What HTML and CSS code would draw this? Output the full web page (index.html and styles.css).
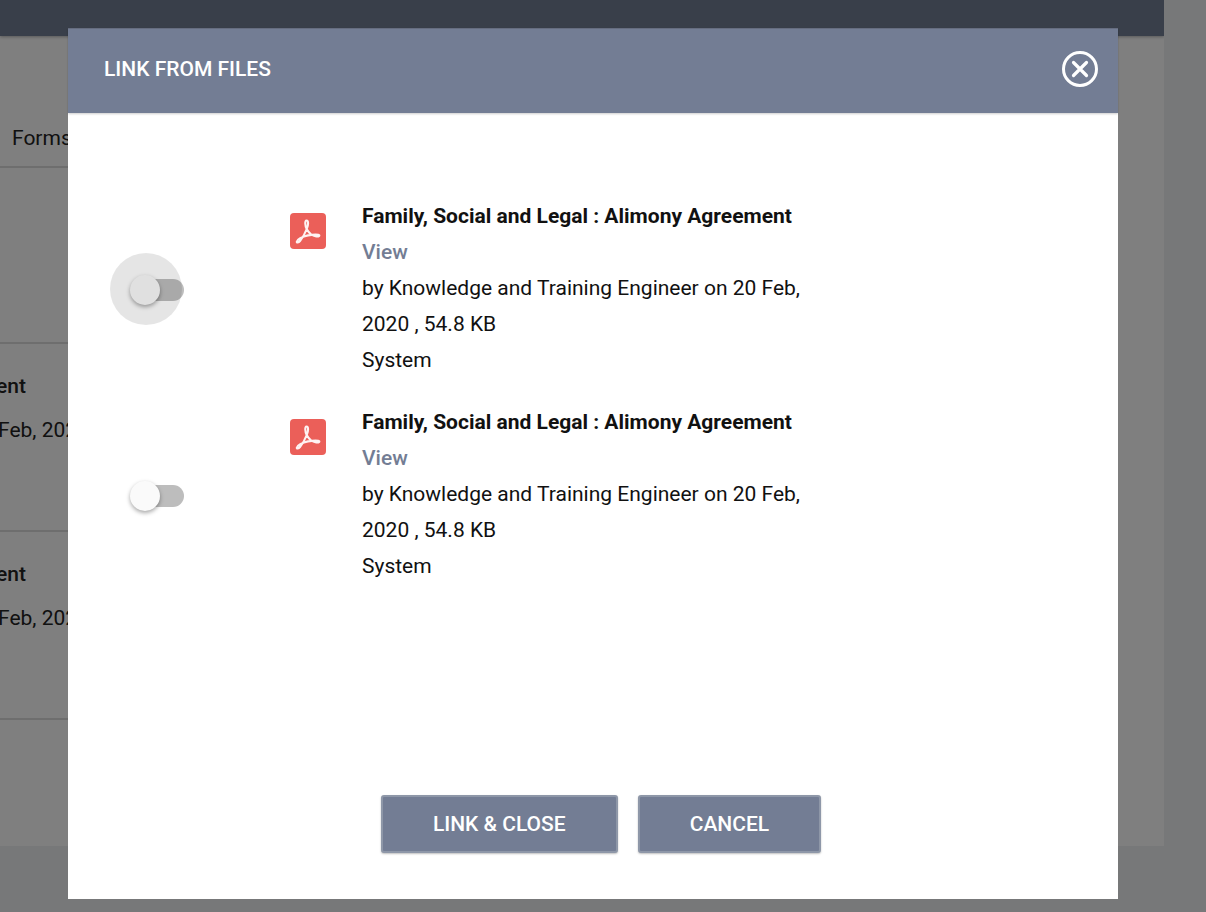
FILE: index.html
```html
<!DOCTYPE html>
<html lang="en">
<head>
  <meta charset="UTF-8">
  <meta name="viewport" content="width=device-width, initial-scale=1.0">
  <title>Link From Files</title>
  <link rel="stylesheet" href="styles.css">
</head>
<body>
  <main class="page">
    <div class="topbar"></div>
    <div class="list">
      <nav class="tabs"><a class="tab" href="#forms">Forms</a></nav>
      <div class="entry entry-first"></div>
      <div class="entry">
        <div class="entry-title">ent</div>
        <div>Feb, 2020</div>
      </div>
      <div class="entry">
        <div class="entry-title">ent</div>
        <div>Feb, 2020</div>
      </div>
    </div>
  </main>

  <svg class="sprite" aria-hidden="true">
    <symbol id="pdf" viewBox="0 0 36 36">
      <rect width="36" height="36" rx="4" fill="#eb5f59"/>
      <g fill="none" stroke="#fff" stroke-opacity="0.92" stroke-width="2.100" stroke-linecap="round" stroke-linejoin="round">
        <path d="M16.700 16C15 12.500 14.600 7.500 16.600 7.500s1.900 4.500.1 8.500C15.200 20 12.800 24.500 10 28c-1.500 1.900-3.400 2-3.200.6.300-2 5.200-5 11.200-6.200 4.500-.9 11.600-1.300 11.400.3-.2 1.600-5.600.8-8.200-1.200-1.700-1.400-3.200-3-4.500-5.500z"/>
      </g>
    </symbol>
  </svg>

  <div class="overlay">
    <section class="dialog" role="dialog" aria-modal="true" aria-labelledby="dialog-title">
      <header class="dialog-header">
        <h1 class="dialog-title" id="dialog-title">LINK FROM FILES</h1>
        <button class="close" type="button" aria-label="Close">
          <svg width="36" height="36" viewBox="0 0 36 36" fill="none" stroke="#fff">
            <circle cx="18" cy="18" r="16.500" stroke-width="3"/>
            <path d="M11.500 11.500l13 13M24.500 11.500l-13 13" stroke-width="3.200" stroke-linecap="round"/>
          </svg>
        </button>
      </header>

      <div class="files">
        <div class="file">
          <div class="toggle focused">
            <input type="checkbox" class="switch" id="file1">
          </div>
          <svg class="file-icon"><use href="#pdf"/></svg>
          <div class="file-info">
            <label class="file-name" for="file1">Family, Social and Legal : Alimony Agreement</label>
            <a class="view" href="#view1">View</a>
            <div>by Knowledge and Training Engineer on 20 Feb, 2020 , 54.8 KB</div>
            <div>System</div>
          </div>
        </div>
        <div class="file">
          <div class="toggle">
            <input type="checkbox" class="switch" id="file2">
          </div>
          <svg class="file-icon"><use href="#pdf"/></svg>
          <div class="file-info">
            <label class="file-name" for="file2">Family, Social and Legal : Alimony Agreement</label>
            <a class="view" href="#view2">View</a>
            <div>by Knowledge and Training Engineer on 20 Feb, 2020 , 54.8 KB</div>
            <div>System</div>
          </div>
        </div>
      </div>

      <footer class="actions">
        <button class="btn" type="button">LINK &amp; CLOSE</button>
        <button class="btn" type="button">CANCEL</button>
      </footer>
    </section>
  </div>
</body>
</html>
```

FILE: styles.css
```css
* {
  box-sizing: border-box;
}

body {
  margin: 0;
  height: 100vh;
  overflow: hidden;
  background-color: #eef0f3;
  color: #111;
  font-family: Roboto, sans-serif;
  font-size: 21px;
  line-height: 36px;
}

/* page behind the dialog */
.page {
  height: calc(100vh - 66px);
  margin-right: 42px;
  background-color: #fff;
  overflow: hidden;
}

.topbar {
  height: 36px;
  background-color: #727e94;
  box-shadow: 0 1px 3px rgba(0, 0, 0, 0.3);
}

.list {
  margin-right: 60px;
}

.tabs {
  padding: 84px 12px 10px;
  border-bottom: 2px solid #dcdcdc;
}

.tab {
  display: block;
  color: #222;
  text-decoration: none;
}

.entry {
  height: 188px;
  padding-top: 20px;
  margin-left: -2px;
  border-bottom: 2px solid #dcdcdc;
  color: #222;
  line-height: 44px;
}

.entry-first {
  height: 176px;
}

.entry-title {
  margin-left: -2px;
  font-weight: 500;
}

.sprite {
  position: absolute;
  width: 0;
  height: 0;
}

/* dialog */
.overlay {
  position: fixed;
  inset: 0;
  display: flex;
  padding: 28px 88px 13px 68px;
  background-color: rgba(0, 0, 0, 0.5);
}

.dialog {
  flex: 1;
  display: flex;
  flex-direction: column;
  background-color: #fff;
}

.dialog-header {
  display: flex;
  align-items: center;
  justify-content: space-between;
  padding: 22px 20px 26px 36px;
  border-top: 1px solid #666d80;
  background-color: #737d94;
  box-shadow: 0 1px 2px rgba(0, 0, 0, 0.2);
}

.dialog-title {
  margin: 0;
  color: #fff;
  font-size: 21px;
  font-weight: 500;
}

.close {
  display: flex;
  padding: 0;
  border: none;
  background: none;
  cursor: pointer;
}

.files {
  flex: 1;
  display: flex;
  flex-direction: column;
  gap: 26px;
  padding: 85px 62px 0;
}

.file {
  display: grid;
  grid-template-columns: 160px 72px minmax(0, 460px);
}

.toggle {
  position: relative;
  align-self: center;
  justify-self: start;
  display: flex;
  padding-top: 4px;
}

.switch {
  appearance: none;
  position: relative;
  width: 54px;
  height: 30px;
  margin: 0;
  cursor: pointer;
}

.switch::before {
  content: "";
  position: absolute;
  inset: 4px 0 4px 8px;
  border-radius: 11px;
  background-color: #bdbdbd;
}

.switch::after {
  content: "";
  position: absolute;
  top: 0;
  left: 0;
  width: 30px;
  height: 30px;
  border-radius: 50%;
  background-color: #fafafa;
  box-shadow: 0 2px 4px rgba(0, 0, 0, 0.35);
}

.switch:checked::after {
  left: 24px;
}

/* ripple round the knob */
.focused::after {
  content: "";
  position: absolute;
  top: -18px;
  left: -20px;
  width: 72px;
  height: 72px;
  border-radius: 50%;
  background-color: rgba(0, 0, 0, 0.1);
  pointer-events: none;
}

.file-icon {
  width: 36px;
  height: 36px;
  margin-top: 15px;
}

.file-name,
.view {
  display: block;
  font-weight: 700;
}

.view {
  color: #737d94;
  font-weight: 500;
  text-decoration: none;
}

.actions {
  display: flex;
  justify-content: center;
  gap: 20px;
  padding: 0 0 46px 16px;
}

.btn {
  padding: 9px 50px;
  border: 2px solid #8e97a8;
  border-radius: 3px;
  background-color: #737d94;
  box-shadow: 0 1px 2px rgba(0, 0, 0, 0.25);
  color: #fff;
  font: 500 21px/36px Roboto, sans-serif;
  cursor: pointer;
}
```
